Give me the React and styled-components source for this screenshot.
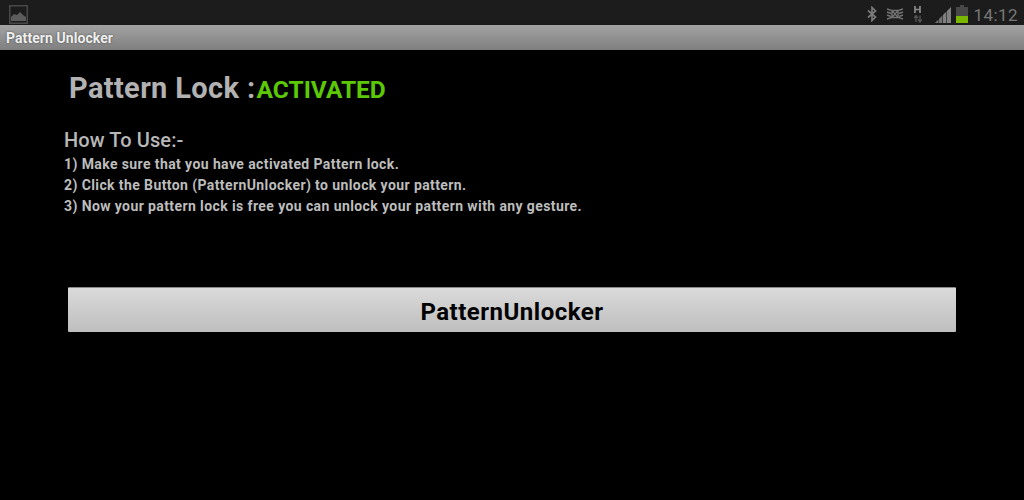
import React from "react";
import styled, { createGlobalStyle } from "styled-components";

const Global = createGlobalStyle`
  html, body { margin: 0; padding: 0; background: #000; }
  body { width: 1024px; height: 500px; overflow: hidden; font-family: Roboto, "Liberation Sans", sans-serif; }
`;
const Page = styled.div`
  width: 1024px; height: 500px; display: flex; flex-direction: column; background: #000;
`;
const StatusBar = styled.div`
  height: 25px; flex: none; background: #1c1c1c; display: flex;
  justify-content: space-between; padding: 0 6px 0 9px; box-sizing: border-box;
`;
const StatusIcons = styled.div`
  display: flex; height: 25px;
`;
const Icon = styled.svg`
  flex: none; display: block;
  margin-top: ${(p) => p.$top}px;
  margin-right: ${(p) => p.$gap || 0}px;
`;
const Clock = styled.span`
  font-size: 17px; color: #787878; margin-left: 5px; letter-spacing: 0.45px; line-height: 30px; height: 25px;
`;
const TitleBar = styled.div`
  height: 25px; flex: none; box-sizing: border-box; padding-left: 6px;
  background: linear-gradient(#a3a3a3, #7f7f7f); display: flex; align-items: center;
  font-size: 14px; font-weight: 700; letter-spacing: 0.07px; color: #efefef; text-shadow: 0 0 2px #444;
`;
const Content = styled.div`
  flex: 1; display: flex; flex-direction: column; padding: 0 68px;
`;
const Heading = styled.div`
  display: flex; align-items: baseline; margin: 19px 0 0 1px; height: 38px; line-height: 38px;
`;
const HeadingLabel = styled.span`
  font-size: 29px; font-weight: 700; letter-spacing: 0.36px; color: #b2b2b2;
`;
const Status = styled.span`
  font-size: 24.5px; font-weight: 700; color: #5cc806; margin-left: 1px;
`;
const Instructions = styled.div`
  margin: 20px 0 0 -4px; color: #bdbdbd; height: 73px; display: flex; flex-direction: column;
`;
const HowTo = styled.div`
  font-size: 20px; font-weight: 500; letter-spacing: 0.1px; line-height: 26px; color: #b8b8b8;
`;
const Step = styled.div`
  font-size: 14px; font-weight: 700; line-height: 21px; letter-spacing: 0.4px;
  position: relative; top: 1px;
`;
const UnlockButton = styled.button`
  margin-top: 87px; width: 888px; height: 45px; flex: none; border: 0; border-radius: 1px; padding: 3px 0 0;
  border-top: 1px solid #8a8a8a;
  background: linear-gradient(#dadada, #bebebe); color: #000;
  font-family: inherit; font-size: 24px; font-weight: 700; letter-spacing: 0.5px;
`;

const Gallery = () => (
  <Icon $top={5} width="19" height="19" viewBox="0 0 19 19">
    <rect x="0.75" y="0.75" width="17.5" height="17.5" fill="none" stroke="#484848" strokeWidth="1.5" />
    <path d="M2 16 L2 12 L5 9 L8 10 L11 7 L14 10 L17 12 L17 16 Z" fill="#5c5c5c" />
  </Icon>
);
const Bluetooth = () => (
  <Icon $top={6} $gap={9} width="10" height="16" viewBox="0 0 10 16">
    <path d="M1 4.5 L8.5 11 L5 14.5 L5 1.5 L8.5 5 L1 11.5" fill="none" stroke="#7a7a7a" strokeWidth="1.7" />
  </Icon>
);
const Vibrate = () => (
  <Icon $top={8} $gap={10} width="18" height="12" viewBox="0 0 18 12">
    <path d="M1 1 L6 2.5 L12 9.5 L17 11 M17 1 L12 2.5 L6 9.5 L1 11 M6 2.5 H12 V9.5 H6 Z M1 4 L5 5.5 M1 7 L5 8.5 M13 5.5 L17 4 M13 8.5 L17 7" fill="none" stroke="#727272" strokeWidth="1.4" />
  </Icon>
);
const DataType = () => (
  <Icon $top={6} $gap={13} width="8" height="17" viewBox="0 0 8 17">
    <path d="M1 0 V7 M6 0 V7 M1 3.5 H6" stroke="#8a8a8a" strokeWidth="1.7" fill="none" />
    <path d="M2 16 V10 M0 12 L2 9.5 L4 12 M6 9.5 V15.5 M4 13.5 L6 16 L8 13.5" stroke="#555" strokeWidth="1.3" fill="none" />
  </Icon>
);
const Signal = () => (
  <Icon $top={7} $gap={5} width="16" height="16" viewBox="0 0 16 16">
    <path d="M0 16 H3.4 V12.6 Z M4 16 H7.4 V8.6 L4 12 Z" fill="#727272" />
    <path d="M8 16 H11.4 V4.6 L8 8 Z M12 16 H16 V0 L12 4 Z" fill="#808080" />
  </Icon>
);
const Battery = () => (
  <Icon $top={5} width="12" height="18" viewBox="0 0 12 18">
    <path d="M4 0 H8 V2 H12 V18 H0 V2 H4 Z" fill="#484848" />
    <rect y="11" width="12" height="7" fill="#7ab800" />
  </Icon>
);

export default function App() {
  return (
    <Page>
      <Global />
      <StatusBar>
        <Gallery />
        <StatusIcons>
          <Bluetooth />
          <Vibrate />
          <DataType />
          <Signal />
          <Battery />
          <Clock>14:12</Clock>
        </StatusIcons>
      </StatusBar>
      <TitleBar>Pattern Unlocker</TitleBar>
      <Content>
        <Heading>
          <HeadingLabel>Pattern Lock :</HeadingLabel>
          <Status>ACTIVATED</Status>
        </Heading>
        <Instructions>
          <HowTo>How To Use:-</HowTo>
          <Step>1) Make sure that you have activated Pattern lock.</Step>
          <Step>2) Click the Button (PatternUnlocker) to unlock your pattern.</Step>
          <Step>3) Now your pattern lock is free you can unlock your pattern with any gesture.</Step>
        </Instructions>
        <UnlockButton>PatternUnlocker</UnlockButton>
      </Content>
    </Page>
  );
}
